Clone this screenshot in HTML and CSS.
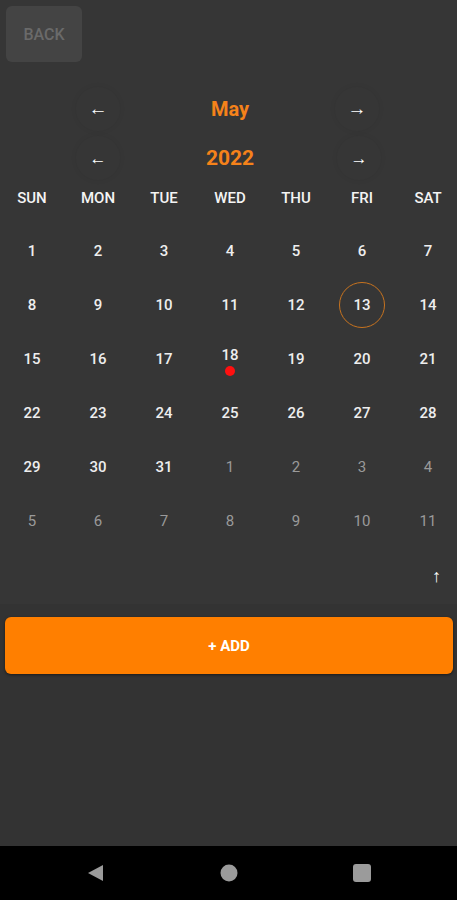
FILE: index.html
```html
<!DOCTYPE html>
<html>
<head>
  <meta name="viewport" content="width=device-width, initial-scale=1.0">
  <title>Calendar</title>
  <link rel="stylesheet" href="styles.css">
</head>
<body>
  <div class="screen">
    <div class="top">
      <button class="back">BACK</button>
    </div>

    <div class="calendar">
      <div class="switch">
        <button class="arrow prev">&larr;</button>
        <div class="title">May</div>
        <button class="arrow next">&rarr;</button>
      </div>
      <div class="switch">
        <button class="arrow prev small">&larr;</button>
        <div class="title">2022</div>
        <button class="arrow next small">&rarr;</button>
      </div>

      <div class="weekdays">
        <span>SUN</span><span>MON</span><span>TUE</span><span>WED</span><span>THU</span><span>FRI</span><span>SAT</span>
      </div>

      <div class="days">
        <div class="day">1</div><div class="day">2</div><div class="day">3</div><div class="day">4</div><div class="day">5</div><div class="day">6</div><div class="day">7</div>
        <div class="day">8</div><div class="day">9</div><div class="day">10</div><div class="day">11</div><div class="day">12</div><div class="day today"><span>13</span></div><div class="day">14</div>
        <div class="day">15</div><div class="day">16</div><div class="day">17</div><div class="day event"><span>18</span><i class="dot"></i></div><div class="day">19</div><div class="day">20</div><div class="day">21</div>
        <div class="day">22</div><div class="day">23</div><div class="day">24</div><div class="day">25</div><div class="day">26</div><div class="day">27</div><div class="day">28</div>
        <div class="day">29</div><div class="day">30</div><div class="day">31</div><div class="day other">1</div><div class="day other">2</div><div class="day other">3</div><div class="day other">4</div>
        <div class="day other">5</div><div class="day other">6</div><div class="day other">7</div><div class="day other">8</div><div class="day other">9</div><div class="day other">10</div><div class="day other">11</div>
      </div>

      <div class="collapse">
        <button class="up">&uarr;</button>
      </div>
    </div>

    <div class="actions">
      <button class="add">+ ADD</button>
    </div>
  </div>

  <div class="navbar">
    <svg width="18" height="18" viewBox="0 0 18 18"><polygon points="16,1 16,17 1,9" fill="#9b9b9b"/></svg>
    <svg width="18" height="18" viewBox="0 0 18 18"><circle cx="9" cy="9" r="8.5" fill="#9b9b9b"/></svg>
    <svg width="18" height="18" viewBox="0 0 18 18"><rect x="0" y="0" width="18" height="18" rx="3" fill="#9b9b9b"/></svg>
  </div>
</body>
</html>
```

FILE: styles.css
```css
body {
  margin: 0;
  height: 100vh;
  display: flex;
  flex-direction: column;
  overflow: hidden;
  background: #333333;
  font-family: Roboto, 'Liberation Sans', sans-serif;
  color: #eeeeee;
}

button {
  font-family: inherit;
  border: none;
  cursor: pointer;
}

.screen {
  flex: 1;
  display: flex;
  flex-direction: column;
}

.top {
  padding: 6px 6px 0;
  background: #363636;
}

.back {
  width: 76px;
  height: 56px;
  background: #444444;
  color: #6a6a6a;
  border-radius: 6px;
  font-size: 16px;
  font-weight: 500;
}

.calendar {
  background: #363636;
  padding-top: 22px;
}

.switch,
.weekdays,
.days {
  display: grid;
  grid-template-columns: repeat(7, 66px);
  margin-left: -1px;
}

.switch {
  align-items: center;
  height: 49px;
}

.arrow {
  grid-column: 2;
  justify-self: center;
  width: 44px;
  height: 44px;
  border-radius: 50%;
  background: transparent;
  box-shadow: 0 0 6px rgba(0, 0, 0, 0.06);
  color: #ffffff;
  font-size: 19px;
  font-weight: 700;
  line-height: 44px;
  padding: 0;
}

.arrow.next {
  grid-column: 6;
  margin-left: -10px;
}

.arrow.small {
  font-size: 17px;
}

.arrow.small.next {
  margin-left: -6px;
}

.title {
  grid-column: 3 / span 3;
  text-align: center;
  color: #f5821a;
  font-size: 20px;
  font-weight: 700;
}

.switch + .switch .title {
  font-size: 21px;
}

.weekdays {
  height: 32px;
  align-items: center;
  text-align: center;
  font-size: 15px;
  font-weight: 500;
  color: #f4f4f4;
}

.days {
  grid-auto-rows: 54px;
  padding-top: 10px;
}

.day {
  display: flex;
  flex-direction: column;
  align-items: center;
  justify-content: center;
  font-size: 15px;
  font-weight: 500;
  color: #eeeeee;
}

.day.other {
  color: #9a9a9a;
  font-weight: 400;
}

.day.today span {
  width: 46px;
  height: 46px;
  border: 1.5px solid #c7731f;
  border-radius: 50%;
  display: flex;
  align-items: center;
  justify-content: center;
  box-sizing: border-box;
}

.day.event span {
  line-height: 18px;
  margin-top: 3px;
}

.dot {
  width: 10px;
  height: 10px;
  border-radius: 50%;
  background: #ff1010;
  margin-top: 2px;
}

.collapse {
  display: flex;
  justify-content: flex-end;
  align-items: center;
  height: 56px;
  padding-right: 16px;
}

.up {
  background: none;
  color: #ffffff;
  font-size: 18px;
  font-weight: 700;
  padding: 0;
}

.actions {
  padding: 13px 4px 0 5px;
}

.add {
  width: 100%;
  height: 57px;
  background: #ff7f00;
  color: #ffffff;
  border-radius: 6px;
  font-size: 15px;
  font-weight: 700;
  padding-top: 2px;
  box-shadow: 0 1px 3px rgba(0, 0, 0, 0.5);
}

.navbar {
  height: 54px;
  background: #000000;
  display: flex;
  justify-content: center;
  align-items: center;
  gap: 115px;
}
```
